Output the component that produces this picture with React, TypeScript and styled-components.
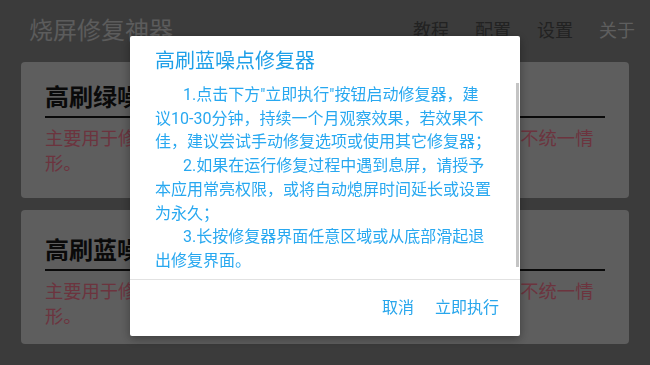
import React from 'react';
import styled, { createGlobalStyle } from 'styled-components';

const Global = createGlobalStyle`
  html, body { margin: 0; padding: 0; }
  body {
    width: 650px;
    height: 365px;
    overflow: hidden;
    background: #767676;
    font-family: Roboto, "Noto Sans CJK SC", sans-serif;
  }
`;

const Screen = styled.div`
  width: 650px;
  height: 365px;
  background: #767676;
  display: flex;
  flex-direction: column;
`;

const AppBar = styled.header`
  height: 62px;
  flex-shrink: 0;
  display: flex;
  align-items: center;
  padding: 0 15px 0 29px;
  box-sizing: border-box;
`;

const AppTitle = styled.h1`
  flex: 1;
  margin: 0;
  font-size: 24px;
  font-weight: 400;
  line-height: 1;
  color: #b8b8b8;
`;

const Menu = styled.nav`
  display: flex;
  gap: 26px;
`;

const MenuItem = styled.span<{ $muted?: boolean }>`
  font-size: 18px;
  line-height: 1;
  color: ${(p) => (p.$muted ? '#bdbdbd' : '#444444')};
`;

const Content = styled.main`
  display: flex;
  flex-direction: column;
  gap: 12px;
  padding: 0 21px;
`;

const Card = styled.section<{ $padTop: number; $padBottom: number }>`
  background: #bcbcbc;
  border-radius: 4px;
  padding: ${(p) => p.$padTop}px 24px ${(p) => p.$padBottom}px;
`;

const CardTitle = styled.h2`
  margin: 0;
  padding-bottom: 3px;
  border-bottom: 2px solid #141414;
  font-size: 24px;
  line-height: 30px;
  font-weight: 700;
  color: #141414;
`;

const CardDesc = styled.p`
  margin: 8px 0 0;
  font-size: 18.3px;
  line-height: 25px;
  color: #d8687c;
`;

const Scrim = styled.div`
  position: fixed;
  inset: 0;
  background: rgba(0, 0, 0, 0.5);
`;

const Dialog = styled.div`
  position: fixed;
  left: 130px;
  top: 36px;
  width: 390px;
  height: 300px;
  background: #ffffff;
  border-radius: 2px;
  box-shadow: 0 3px 10px rgba(0, 0, 0, 0.35);
  display: flex;
  flex-direction: column;
`;

const DialogTitle = styled.h3`
  margin: 0;
  padding: 12px 24px 0 25px;
  font-size: 20px;
  line-height: 26px;
  font-weight: 400;
  color: #1e9fe8;
`;

const DialogBody = styled.div`
  position: relative;
  flex: 1;
  margin-top: 9px;
  padding: 0 27px 0 25px;
`;

const Para = styled.p`
  margin: 0;
  text-indent: 28px;
  font-size: 16px;
  line-height: 23.7px;
  color: #28a8f0;
`;

const ScrollThumb = styled.div`
  position: absolute;
  right: 1px;
  top: 0;
  width: 3px;
  height: 184px;
  background: #c4c4c4;
`;

const Divider = styled.hr`
  margin: 0;
  border: 0;
  height: 1px;
  background: #e2e2e2;
`;

const Footer = styled.div`
  height: 56px;
  display: flex;
  align-items: center;
  justify-content: flex-end;
  gap: 21px;
  padding-right: 21px;
`;

const DialogButton = styled.button`
  background: none;
  border: 0;
  padding: 0;
  font-family: inherit;
  font-size: 16px;
  line-height: 1;
  color: #28a6ec;
  cursor: pointer;
`;

const cards = [
  {
    title: '高刷绿噪点修复器',
    desc: '主要用于修复高刷新率屏幕出现的绿色噪点以及屏幕颜色等不统一情形。',
    padTop: 21,
    padBottom: 22,
  },
  {
    title: '高刷蓝噪点修复器',
    desc: '主要用于修复高刷新率屏幕出现的蓝色噪点以及屏幕颜色等不统一情形。',
    padTop: 26,
    padBottom: 15,
  },
];

export default function App() {
  return (
    <>
      <Global />
      <Screen>
        <AppBar>
          <AppTitle>烧屏修复神器</AppTitle>
          <Menu>
            <MenuItem>教程</MenuItem>
            <MenuItem>配置</MenuItem>
            <MenuItem>设置</MenuItem>
            <MenuItem $muted>关于</MenuItem>
          </Menu>
        </AppBar>
        <Content>
          {cards.map((c) => (
            <Card key={c.title} $padTop={c.padTop} $padBottom={c.padBottom}>
              <CardTitle>{c.title}</CardTitle>
              <CardDesc>{c.desc}</CardDesc>
            </Card>
          ))}
        </Content>
      </Screen>
      <Scrim />
      <Dialog role="dialog">
        <DialogTitle>高刷蓝噪点修复器</DialogTitle>
        <DialogBody>
          <Para>1.点击下方"立即执行"按钮启动修复器，建议10-30分钟，持续一个月观察效果，若效果不佳，建议尝试手动修复选项或使用其它修复器；</Para>
          <Para>2.如果在运行修复过程中遇到息屏，请授予本应用常亮权限，或将自动熄屏时间延长或设置为永久；</Para>
          <Para>3.长按修复器界面任意区域或从底部滑起退出修复界面。</Para>
          <ScrollThumb />
        </DialogBody>
        <Divider />
        <Footer>
          <DialogButton>取消</DialogButton>
          <DialogButton>立即执行</DialogButton>
        </Footer>
      </Dialog>
    </>
  );
}
